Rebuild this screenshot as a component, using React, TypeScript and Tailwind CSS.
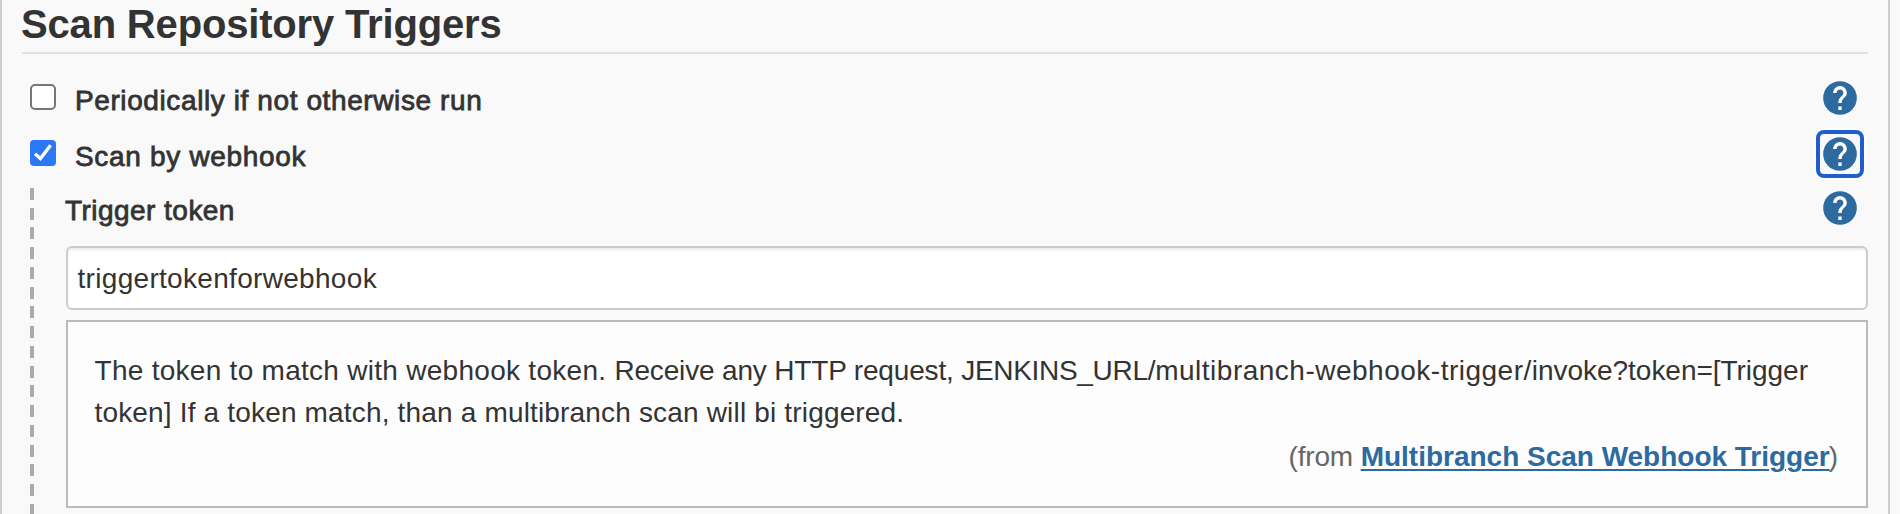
import React from "react";

function HelpButton({ focused = false }: { focused?: boolean }) {
  return (
    <button
      type="button"
      aria-label="Help"
      className={
        focused
          ? "flex h-12 w-12 shrink-0 items-center justify-center rounded-lg border-4 border-[#1f5fcb] shadow-[0_0_0_2px_#ffffff]"
          : "flex h-12 w-12 shrink-0 items-center justify-center"
      }
    >
      <svg viewBox="2 2 20 20" className="h-[34px] w-[34px] shrink-0">
        <circle cx="12" cy="12" r="9.9" fill="#2c6a9f" />
        <path
          fill="#ffffff"
          d="M13 19h-2v-2h2v2zm2.07-7.75l-.9.92C13.45 12.9 13 13.5 13 15h-2v-.5c0-1.1.45-2.1 1.17-2.83l1.24-1.26c.37-.36.59-.86.59-1.41 0-1.1-.9-2-2-2s-2 .9-2 2H8c0-2.21 1.79-4 4-4s4 1.79 4 4c0 .88-.36 1.68-.93 2.25z"
        />
      </svg>
    </button>
  );
}

function Checkbox({ checked = false }: { checked?: boolean }) {
  return checked ? (
    <span role="checkbox" aria-checked="true" className="block h-[26px] w-[26px] rounded bg-[#2b78f6]">
      <svg viewBox="0 0 26 26" className="block h-full w-full">
        <path d="M5 13.8 10.4 18.6 20.6 5.2" fill="none" stroke="#ffffff" strokeWidth="3.4" />
      </svg>
    </span>
  ) : (
    <span
      role="checkbox"
      aria-checked="false"
      className="block h-[26px] w-[26px] rounded-[5px] border-2 border-[#767676] bg-white"
    />
  );
}

export default function App() {
  return (
    <div className="h-[514px] w-[1900px] overflow-hidden bg-[#f9f9f9] font-['Liberation_Sans',Arial,sans-serif] text-[28px] text-[#333333]">
      <div className="h-full w-[1890px] border-x-2 border-[#cccccc] px-5">
        <h1 className="h-[54px] whitespace-nowrap border-b-2 border-[#e0e0e0] text-[40px] font-bold leading-[48px] tracking-[-0.17px]">
          <span className="-ml-px">Scan Repository Triggers</span>
        </h1>
        <div className="mt-5 flex h-14 pl-2 pr-1">
          <div className="pt-[10px]">
            <Checkbox />
          </div>
          <span className="ml-[19px] grow pt-[11px] leading-8 tracking-[0.6px] [-webkit-text-stroke:0.8px_#333333]">
            Periodically if not otherwise run
          </span>
          <HelpButton />
        </div>
        <div className="flex h-[58px] pl-2 pr-1">
          <div className="pt-[10px]">
            <Checkbox checked />
          </div>
          <span className="ml-[19px] grow pt-[11px] leading-8 tracking-[0.68px] [-webkit-text-stroke:0.8px_#333333]">
            Scan by webhook
          </span>
          <HelpButton focused />
        </div>
        <div className="flex h-[326px] pl-2">
          <div className="w-1 shrink-0 bg-[repeating-linear-gradient(to_bottom,#aaaaaa_0px,#aaaaaa_12px,transparent_12px,transparent_19.75px)]" />
          <div className="ml-8 flex grow flex-col">
            <div className="flex h-[58px] pr-1">
              <span className="-ml-px grow pt-[7px] leading-8 tracking-[0.46px] [-webkit-text-stroke:0.8px_#333333]">
                Trigger token
              </span>
              <div className="-mt-1">
                <HelpButton />
              </div>
            </div>
            <div className="flex h-16 rounded-md border-2 border-[#cccccc] bg-white pl-[9.5px] pt-[10px] leading-[42px] tracking-[0.31px] shadow-[inset_0_2px_2px_rgba(0,0,0,0.08)]">
              triggertokenforwebhook
            </div>
            <div className="mt-[10px] h-[188px] border-2 border-[#bbbbbb] bg-[#fdfdfd] pl-[26.5px] pr-[29px] pt-[28px] leading-[42px]">
              <div className="whitespace-nowrap">
                <span className="tracking-[0.28px]">The token to match with webhook token. </span>
                <span className="tracking-[-0.165px]">Receive any HTTP request, </span>
                <span className="tracking-[-0.31px]">JENKINS_URL/</span>
                <span className="tracking-[0.5px]">multibranch-webhook-trigger/</span>
                <span className="tracking-[-0.03px]">invoke?token=[Trigger</span>
              </div>
              <div className="whitespace-nowrap tracking-[0.17px]">
                token] If a token match, than a multibranch scan will bi triggered.
              </div>
              <div className="mt-0.5 text-right text-[#666666]">
                <span className="tracking-[-0.15px]">(from </span>
                <a className="font-bold tracking-[-0.01px] text-[#2c6a9f] underline decoration-2 underline-offset-[3px]">
                  Multibranch Scan Webhook Trigger
                </a>
                <span className="-ml-px -mr-px">)</span>
              </div>
            </div>
          </div>
        </div>
      </div>
    </div>
  );
}
